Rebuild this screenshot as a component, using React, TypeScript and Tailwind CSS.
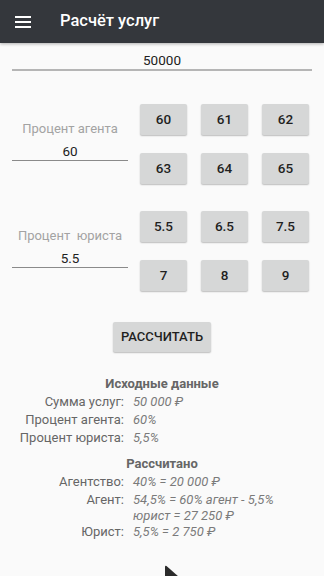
import React from "react";

const font = { fontFamily: "Roboto, 'Noto Sans', sans-serif" };

function Btn({ children }: { children: React.ReactNode }) {
  return (
    <div className="h-[31px] w-[47px] bg-[#d6d7d7] rounded-[2px] shadow-[0_1px_1.5px_rgba(0,0,0,0.25)] flex items-center justify-center text-[13.5px] font-medium text-[#1f1f1f]">
      {children}
    </div>
  );
}

function Group({ label, value, items }: { label: string; value: string; items: string[] }) {
  return (
    <div className="flex">
      <div className="ml-[12px] w-[116px] flex flex-col items-center pt-[17px]">
        <div className="leading-[16px] text-[13px] text-[#a3a3a3] whitespace-pre">{label}</div>
        <div className="mt-[5px] w-full text-center leading-[18px] text-[13.5px] text-[#212121] border-b border-[#8a8a8a]">
          {value}
        </div>
      </div>
      <div className="ml-[12px] grid grid-cols-[47px_47px_47px] gap-x-[14px] gap-y-[18px]">
        {items.map((i) => (
          <Btn key={i}>{i}</Btn>
        ))}
      </div>
    </div>
  );
}

function Row({ label, children }: { label: string; children: React.ReactNode }) {
  return (
    <div className="flex items-start">
      <div className="w-[124px] text-right text-[13px] text-[#666] leading-[18px]">{label}</div>
      <div className="ml-[9px] text-[13px] italic text-[#7a7a7a] leading-[18px]">{children}</div>
    </div>
  );
}

export default function App() {
  return (
    <div className="relative w-[324px] h-[576px] overflow-hidden bg-[#fafafa]" style={font}>
      <div className="h-[43px] bg-[#34373c] flex items-center shadow-[0_1px_3px_rgba(0,0,0,0.3)] relative z-10">
        <div className="ml-[15px] w-[16px] flex flex-col gap-[3px]">
          <div className="h-[2px] bg-white" />
          <div className="h-[2px] bg-white" />
          <div className="h-[2px] bg-white" />
        </div>
        <div className="ml-[29px] text-white text-[16.5px] font-medium">Расчёт услуг</div>
      </div>

      <div className="mx-[12px] mt-[8px] text-center text-[13.5px] leading-[18px] text-[#212121] border-b-2 border-[#b5b5b5]">
        50000
      </div>

      <div className="mt-[33px]">
        <Group label="Процент агента" value="60" items={["60", "61", "62", "63", "64", "65"]} />
      </div>
      <div className="mt-[27px]">
        <Group label="Процент  юриста" value="5.5" items={["5.5", "6.5", "7.5", "7", "8", "9"]} />
      </div>

      <div className="mt-[31px] flex justify-center">
        <div className="h-[30px] w-[98px] bg-[#d6d7d7] rounded-[2px] shadow-[0_1px_1.5px_rgba(0,0,0,0.25)] flex items-center justify-center text-[13px] font-medium text-[#1f1f1f]">
          РАССЧИТАТЬ
        </div>
      </div>

      <div className="mt-[23px]">
        <div className="text-center text-[13px] font-bold text-[#666] leading-[18px]">Исходные данные</div>
        <Row label="Сумма услуг:">50 000 ₽</Row>
        <Row label="Процент агента:">60%</Row>
        <Row label="Процент юриста:">5,5%</Row>
        <div className="mt-[8px] text-center text-[13px] font-bold text-[#666] leading-[18px]">Рассчитано</div>
        <Row label="Агентство:">40% = 20 000 ₽</Row>
        <Row label="Агент:">
          <div>54,5% = 60% агент - 5,5%</div>
          <div className="leading-[14px]">юрист = 27 250 ₽</div>
        </Row>
        <Row label="Юрист:">5,5% = 2 750 ₽</Row>
      </div>

      <svg className="absolute left-[164px] top-[565px]" width="16" height="12" viewBox="0 0 16 12">
        <path d="M1 2 Q1 0 2.5 1 L15 12 L1 12 Z" fill="#2b2b2b" />
      </svg>
    </div>
  );
}
